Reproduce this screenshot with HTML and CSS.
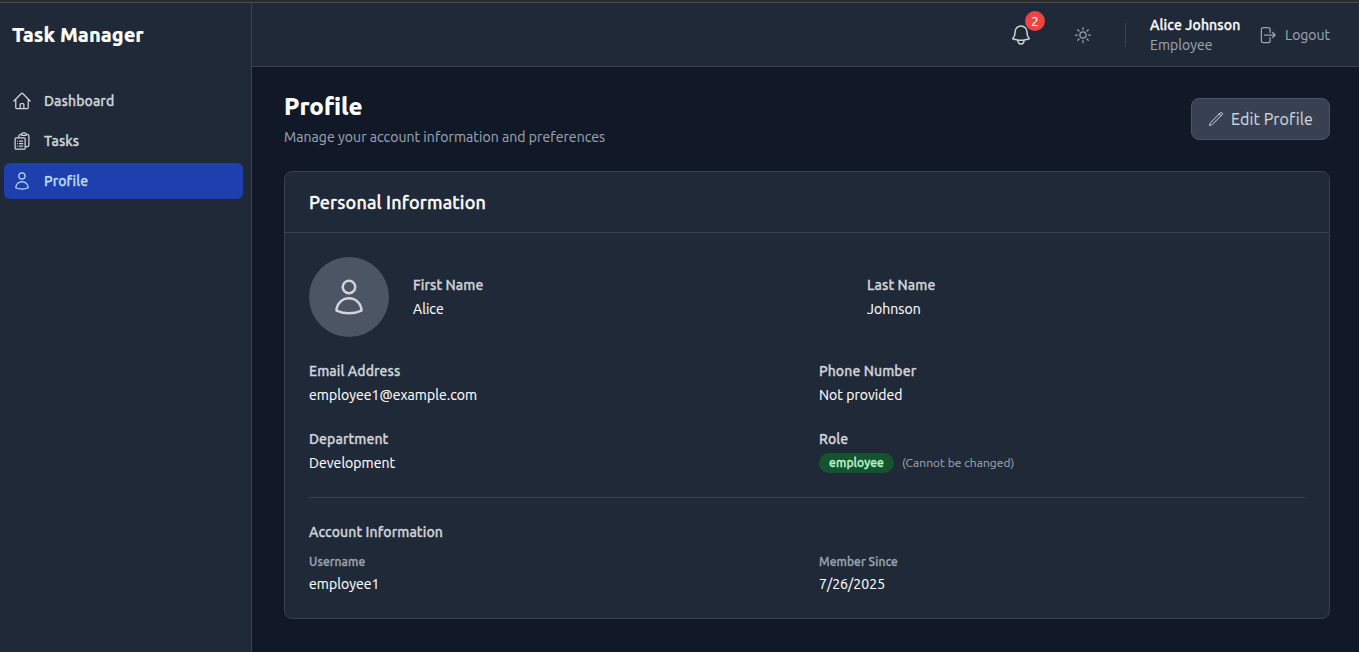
FILE: index.html
```html
<!DOCTYPE html>
<html lang="en">
<head>
<meta charset="utf-8">
<title>Task Manager</title>
<link rel="stylesheet" href="styles.css">
</head>
<body>
<div class="top-strip"></div>
<div class="app">
  <aside class="sidebar">
    <div class="brand">Task Manager</div>
    <nav class="nav">
      <a class="nav-item"><svg class="icon" viewBox="0 0 24 24"><path d="M2.25 12l8.954-8.955c.44-.439 1.152-.439 1.591 0L21.75 12M4.5 9.75v10.125c0 .621.504 1.125 1.125 1.125H9.75v-4.875c0-.621.504-1.125 1.125-1.125h2.25c.621 0 1.125.504 1.125 1.125V21h4.125c.621 0 1.125-.504 1.125-1.125V9.75M8.25 21h8.25"/></svg><span>Dashboard</span></a>
      <a class="nav-item"><svg class="icon" viewBox="0 0 24 24"><path d="M9 12h3.75M9 15h3.75M9 18h3.75m3 .75H18a2.25 2.25 0 002.25-2.25V6.108c0-1.135-.845-2.098-1.976-2.192a48.424 48.424 0 00-1.123-.08m-5.801 0c-.065.21-.1.433-.1.664 0 .414.336.75.75.75h4.5a.75.75 0 00.75-.75 2.25 2.25 0 00-.1-.664m-5.8 0A2.251 2.251 0 0113.5 2.25H15c1.012 0 1.867.668 2.15 1.586m-5.8 0c-.376.023-.75.05-1.124.08C9.095 4.01 8.25 4.973 8.25 6.108V8.25m0 0H4.875c-.621 0-1.125.504-1.125 1.125v11.25c0 .621.504 1.125 1.125 1.125h9.75c.621 0 1.125-.504 1.125-1.125V9.375c0-.621-.504-1.125-1.125-1.125H8.25zM6.75 12h.008v.008H6.75V12zm0 3h.008v.008H6.75V15zm0 3h.008v.008H6.75V18z"/></svg><span>Tasks</span></a>
      <a class="nav-item active"><svg class="icon" viewBox="0 0 24 24"><path d="M15.75 6a3.75 3.75 0 11-7.5 0 3.75 3.75 0 017.5 0zM4.501 20.118a7.5 7.5 0 0114.998 0A17.933 17.933 0 0112 21.75c-2.676 0-5.216-.584-7.499-1.632z"/></svg><span>Profile</span></a>
    </nav>
  </aside>
  <div class="page">
    <header class="header">
      <button class="bell"><svg class="icon-lg" viewBox="0 0 24 24"><path d="M14.857 17.082a23.848 23.848 0 005.454-1.31A8.967 8.967 0 0118 9.75v-.7V9A6 6 0 006 9v.75a8.967 8.967 0 01-2.312 6.022c1.733.64 3.56 1.085 5.455 1.31m5.714 0a24.255 24.255 0 01-5.714 0m5.714 0a3 3 0 11-5.714 0"/></svg><span class="badge">2</span></button>
      <button class="theme"><svg class="icon" viewBox="0 0 24 24"><path d="M12 3v2.25m6.364.386l-1.591 1.591M21 12h-2.25m-.386 6.364l-1.591-1.591M12 18.75V21m-4.773-4.227l-1.591 1.591M5.25 12H3m4.227-4.773L5.636 5.636M15.75 12a3.75 3.75 0 11-7.5 0 3.75 3.75 0 017.5 0z"/></svg></button>
      <div class="divider"></div>
      <div class="user"><div class="user-name">Alice Johnson</div><div class="user-role">Employee</div></div>
      <button class="logout"><svg class="icon" viewBox="0 0 24 24"><path d="M15.75 9V5.25A2.25 2.25 0 0013.5 3h-6a2.25 2.25 0 00-2.25 2.25v13.5A2.25 2.25 0 007.5 21h6a2.25 2.25 0 002.25-2.25V15m3 0l3-3m0 0l-3-3m3 3H9"/></svg><span>Logout</span></button>
    </header>
    <main class="main">
      <div class="title-row">
        <div>
          <h1 class="title">Profile</h1>
          <p class="subtitle">Manage your account information and preferences</p>
        </div>
        <button class="edit"><svg class="icon-sm" viewBox="0 0 24 24"><path d="M16.862 4.487l1.687-1.688a1.875 1.875 0 112.652 2.652L6.832 19.82a4.5 4.5 0 01-1.897 1.13l-2.685.8.8-2.685a4.5 4.5 0 011.13-1.897L16.863 4.487zm0 0L19.5 7.125"/></svg><span>Edit Profile</span></button>
      </div>
      <section class="card">
        <h2 class="card-head">Personal Information</h2>
        <div class="card-body">
          <div class="identity">
            <div class="avatar"><svg class="icon-xl" viewBox="0 0 24 24"><path d="M15.75 6a3.75 3.75 0 11-7.5 0 3.75 3.75 0 017.5 0zM4.501 20.118a7.5 7.5 0 0114.998 0A17.933 17.933 0 0112 21.75c-2.676 0-5.216-.584-7.499-1.632z"/></svg></div>
            <div class="grid names">
              <div><div class="label">First Name</div><div class="value">Alice</div></div>
              <div><div class="label">Last Name</div><div class="value">Johnson</div></div>
            </div>
          </div>
          <div class="grid details">
            <div><div class="label">Email Address</div><div class="value">employee1@example.com</div></div>
            <div><div class="label">Phone Number</div><div class="value">Not provided</div></div>
            <div><div class="label">Department</div><div class="value">Development</div></div>
            <div><div class="label">Role</div><div class="role-line"><span class="pill">employee</span><span class="hint">(Cannot be changed)</span></div></div>
          </div>
          <div class="account">
            <h3 class="account-title">Account Information</h3>
            <div class="grid">
              <div><div class="small-label">Username</div><div class="value">employee1</div></div>
              <div><div class="small-label">Member Since</div><div class="value">7/26/2025</div></div>
            </div>
          </div>
        </div>
      </section>
    </main>
  </div>
</div>
</body>
</html>
```
FILE: styles.css
```css
* { box-sizing: border-box; margin: 0; padding: 0; }
body {
  height: 652px;
  display: flex;
  flex-direction: column;
  overflow: hidden;
  background: #111827;
  color: #fff;
  font-family: Ubuntu, "Noto Sans", "Open Sans", sans-serif;
  font-size: 14px;
  line-height: 20px;
  font-weight: 400;
  white-space: nowrap;
  -webkit-text-stroke: 0.12px currentColor;
}
button { background: none; border: 0; font: inherit; color: inherit; display: flex; align-items: center; }
svg { display: block; flex: none; fill: none; stroke: currentColor; stroke-width: 1.5; stroke-linecap: round; stroke-linejoin: round; }
.icon { width: 20px; height: 20px; }
.icon-sm { width: 16px; height: 16px; }
.icon-lg { width: 24px; height: 24px; }
.icon-xl { width: 40px; height: 40px; }

.top-strip { height: 3px; flex: none; background: #2c2c2c; border-bottom: 1px solid #4b4b4b; }
.app { display: flex; flex: 1; }

/* Medium-weight text */
.nav-item, .user-name, .card-head, .label, .pill, .account-title, .small-label {
  font-weight: 500;
  letter-spacing: 0.09px;
  -webkit-text-stroke: 0.3px currentColor;
}

.sidebar { width: 252px; flex: none; background: #1f2937; border-right: 1px solid #374151; }
.brand { height: 64px; padding: 0 12px; display: flex; align-items: center; font-size: 20px; line-height: 28px; font-weight: 780; }
.nav { display: flex; flex-direction: column; gap: 4px; padding: 16px 8px 0 4px; }
.nav-item { height: 36px; display: flex; align-items: center; gap: 12px; padding: 0 8px; border-radius: 6px; color: #d1d5db; }
.nav-item.active { background: #1e40af; color: #bfdbfe; }

.page { flex: 1; display: flex; flex-direction: column; }
.header { height: 64px; flex: none; display: flex; align-items: center; justify-content: flex-end; padding-right: 29px; background: #1f2937; border-bottom: 1px solid #374151; }
.bell { position: relative; color: #d1d5db; margin-right: 40px; }
.badge { position: absolute; left: 16px; top: -12px; width: 20px; height: 20px; border-radius: 50%; background: #ef4444; color: #fff; font-size: 13px; line-height: 20px; text-align: center; }
.theme { color: #9ca3af; margin-right: 32px; }
.divider { width: 1px; height: 24px; background: #374151; margin-right: 24px; }
.user { width: 91px; margin-right: 16px; }
.user-name { letter-spacing: 0.12px; }
.user-role { color: #9ca3af; letter-spacing: 0.06px; }
.logout { width: 73px; gap: 8px; color: #9ca3af; }

.main { padding: 24px 29px 0 32px; }
.title-row { display: flex; justify-content: space-between; align-items: center; height: 56px; }
.title { font-size: 24px; line-height: 32px; font-weight: 780; }
.subtitle { margin-top: 4px; color: #9ca3af; letter-spacing: 0.07px; }
.edit { width: 139px; height: 42px; padding: 0 16px; gap: 7px; background: #374151; border: 1px solid #4b5563; border-radius: 8px; color: #d1d5db; font-size: 16px; line-height: 24px; letter-spacing: 0.12px; }

.card { margin-top: 24px; height: 448px; background: #1f2937; border: 1px solid #374151; border-radius: 8px; box-shadow: 0 1px 2px rgba(0, 0, 0, .05); }
.card-head { height: 61px; padding: 16px 24px; border-bottom: 1px solid #374151; font-size: 18px; line-height: 28px; letter-spacing: 0.15px; }
.card-body { padding: 24px; }
.identity { display: flex; align-items: center; gap: 24px; }
.avatar { width: 80px; height: 80px; flex: none; display: flex; align-items: center; justify-content: center; border-radius: 50%; background: #4b5563; color: #d1d5db; }
.grid { display: grid; grid-template-columns: 1fr 1fr; column-gap: 24px; }
.names { flex: 1; column-gap: 16px; }
.details { row-gap: 24px; margin-top: 24px; }
.label { color: #d1d5db; margin-bottom: 4px; }
.value { letter-spacing: 0.06px; }
.role-line { height: 20px; display: flex; align-items: center; gap: 8px; }
.pill { width: 75px; height: 20px; display: flex; justify-content: center; border-radius: 10px; background: #14532d; color: #bbf7d0; font-size: 12px; }
.hint { color: #9ca3af; font-size: 12px; letter-spacing: 0.05px; }
.account { margin-top: 24px; padding-top: 24px; border-top: 1px solid #374151; }
.account-title { color: #d1d5db; font-size: 14px; margin-bottom: 12px; }
.small-label { color: #9ca3af; font-size: 12px; line-height: 16px; margin-bottom: 4px; }
```
